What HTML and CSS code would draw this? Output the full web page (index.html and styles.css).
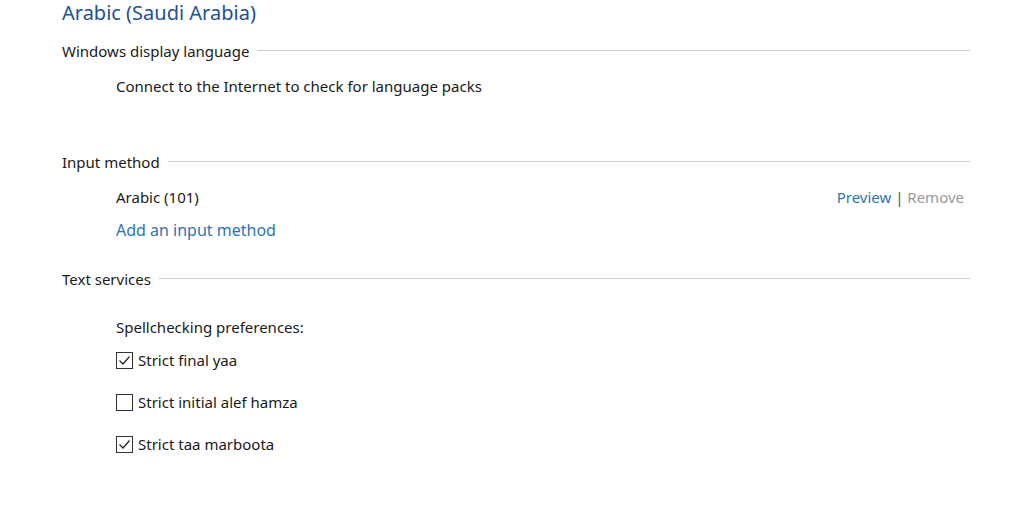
FILE: index.html
```html
<!DOCTYPE html>
<html>
<head>
<meta charset="utf-8">
<link rel="stylesheet" href="styles.css">
</head>
<body>
<div class="page">
  <h1 class="title">Arabic (Saudi Arabia)</h1>

  <div class="section-head"><span>Windows display language</span><div class="rule"></div></div>
  <div class="indent msg">Connect to the Internet to check for language packs</div>

  <div class="section-head sec-input"><span>Input method</span><div class="rule"></div></div>
  <div class="indent row">
    <span>Arabic (101)</span>
    <span class="actions"><a class="link">Preview</a> <span class="sep">|</span> <span class="disabled">Remove</span></span>
  </div>
  <div class="indent add"><a class="link">Add an input method</a></div>

  <div class="section-head sec-text"><span>Text services</span><div class="rule"></div></div>
  <div class="indent spell">Spellchecking preferences:</div>
  <div class="indent checks">
    <label class="check"><span class="box on"><svg viewBox="0 0 17 17" width="17" height="17"><path d="M3.5 8.5 L7 12 L13.5 4.5" fill="none" stroke="#222" stroke-width="1.2"/></svg></span>Strict final yaa</label>
    <label class="check"><span class="box"></span>Strict initial alef hamza</label>
    <label class="check"><span class="box on"><svg viewBox="0 0 17 17" width="17" height="17"><path d="M3.5 8.5 L7 12 L13.5 4.5" fill="none" stroke="#222" stroke-width="1.2"/></svg></span>Strict taa marboota</label>
  </div>
</div>
</body>
</html>
```

FILE: styles.css
```css
html, body {
  margin: 0;
  padding: 0;
  background: #ffffff;
}
body {
  font-family: "Noto Sans", "Open Sans", sans-serif;
  font-size: 15px;
  color: #1a1a1a;
}
.page {
  width: 908px;
  padding: 0 0 0 62px;
}
.title {
  margin: 0;
  font-weight: 400;
  font-size: 20px;
  line-height: 26px;
  color: #1f4f94;
}
.section-head {
  display: flex;
  align-items: center;
  gap: 8px;
  margin-top: 12px;
  height: 26px;
}
.section-head .rule {
  flex: 1;
  height: 1px;
  background: #cccccc;
  margin-top: -2px;
}
.indent {
  padding-left: 54px;
}
.msg {
  margin-top: 11px;
  line-height: 22px;
}
.sec-input {
  margin-top: 52px;
}
.row {
  display: flex;
  justify-content: space-between;
  margin-top: 11px;
  line-height: 22px;
  padding-right: 6px;
}
.link {
  color: #2e73b4;
  cursor: pointer;
}
.sep {
  color: #555;
}
.disabled {
  color: #999999;
}
.add {
  margin-top: 11px;
  line-height: 22px;
  font-size: 16px;
}
.sec-text {
  margin-top: 25px;
}
.spell {
  margin-top: 24px;
  line-height: 22px;
}
.checks {
  display: flex;
  flex-direction: column;
  gap: 20px;
  margin-top: 11px;
}
.check {
  display: flex;
  align-items: center;
  gap: 5px;
  line-height: 22px;
}
.box {
  width: 17px;
  height: 17px;
  box-sizing: border-box;
  border: 1px solid #333;
  position: relative;
  display: inline-block;
}
.box svg {
  position: absolute;
  left: -1px;
  top: -1px;
}
```
